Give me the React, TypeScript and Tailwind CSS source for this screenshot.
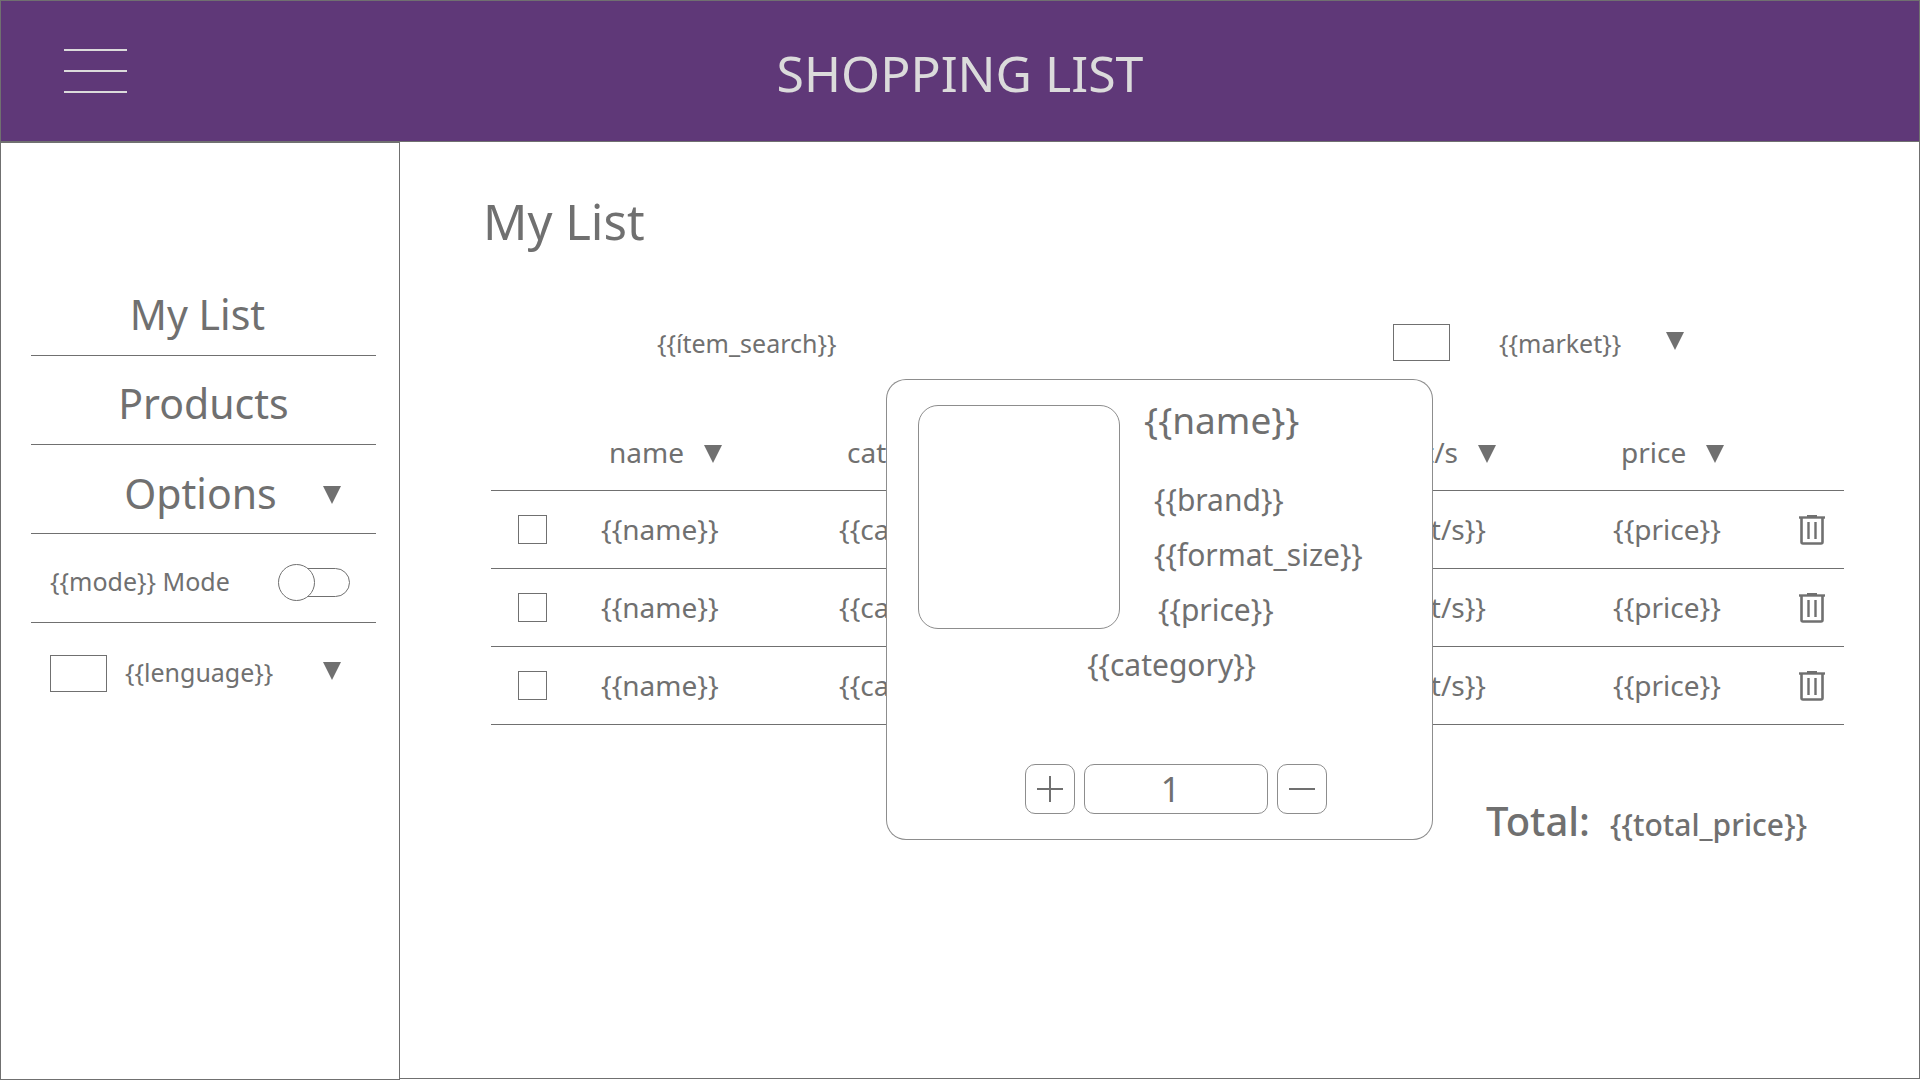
import { useState } from "react";

const rows = [1, 2, 3];

function Arrow({ className = "" }: { className?: string }) {
  return (
    <svg
      viewBox="0 0 18 18"
      className={`h-[18px] w-[18px] shrink-0 fill-[#707070] ${className}`}
      aria-hidden="true"
    >
      <path d="M0 0h18L9 18z" />
    </svg>
  );
}

function TrashIcon() {
  return (
    <svg viewBox="0 0 26 30" className="h-[30px] w-[26px]" fill="none" stroke="#707070" aria-hidden="true">
      <path d="M0 2.5h26" strokeWidth="2.4" />
      <path d="M8 1h10" strokeWidth="2" />
      <path d="M2.5 3v24c0 1 .5 1.5 1.5 1.5h18c1 0 1.5-.5 1.5-1.5V3" strokeWidth="2.6" />
      <path d="M9.5 7v17M16.5 7v17" strokeWidth="2.4" />
    </svg>
  );
}

function SortHeader({ label }: { label: string }) {
  return (
    <button type="button" className="inline-flex items-center gap-5 whitespace-nowrap">
      {label}
      <Arrow className="mt-1" />
    </button>
  );
}

function Sidebar() {
  const [dark, setDark] = useState(false);
  return (
    <aside className="w-[400px] shrink-0 border border-[#707070] pt-[124px] pr-[23px] pl-[30px]">
      <nav>
        <ul className="text-[41px] leading-[60px]">
          <li className="flex h-[89px] items-center justify-center border-b border-[#707070] pt-1.5 pr-3">
            <a href="#list">My List</a>
          </li>
          <li className="flex h-[89px] items-center justify-center border-b border-[#707070] pt-1.5">
            <a href="#products">Products</a>
          </li>
          <li className="h-[89px] border-b border-[#707070]">
            <button type="button" className="relative flex h-full w-full items-center justify-center pt-2 pr-1.5">
              Options
              <Arrow className="absolute right-[35px] mt-1" />
            </button>
          </li>
        </ul>
      </nav>
      <div className="flex h-[89px] items-center justify-between border-b border-[#707070] pt-2 pr-[26px] pl-[19px] text-[25px]">
        <label htmlFor="mode">{"{{mode}} Mode"}</label>
        <span className="relative flex h-[37px] w-[72px] items-center">
          <span className="ml-1 h-[29px] w-full rounded-full border border-[#707070]" />
          <input
            id="mode"
            type="checkbox"
            role="switch"
            checked={dark}
            onChange={() => setDark(!dark)}
            className="absolute left-0 h-[37px] w-[37px] appearance-none rounded-full border border-[#707070] bg-white checked:left-[35px]"
          />
        </span>
      </div>
      <div className="flex h-[100px] items-center gap-[18px] pl-[19px] text-[25px]">
        <span className="h-[37px] w-[57px] border border-[#707070]" />
        <span className="relative flex flex-1 items-center">
          <select aria-label="Language" className="w-full appearance-none bg-transparent outline-none">
            <option>{"{{lenguage}}"}</option>
          </select>
          <Arrow className="pointer-events-none absolute right-[35px] mb-1" />
        </span>
      </div>
    </aside>
  );
}

function ProductCard() {
  const [count, setCount] = useState("1");
  const step = (n: number) => setCount(String(Math.max(0, Number(count) + n)));
  return (
    <section
      role="dialog"
      aria-label="Product"
      className="absolute top-[237px] left-[32%] flex h-[461px] w-[547px] flex-col rounded-[20px] border border-[#707070]/80 bg-white"
    >
      <div className="flex gap-6 pt-[25px] pl-[31px]">
        <div className="h-[224px] w-[202px] rounded-[20px] border border-[#707070]/80" />
        <div className="text-[30px] leading-[55px]">
          <h2 className="mb-[37px] text-[37px] leading-[30px]">{"{{name}}"}</h2>
          <p className="pl-2.5">{"{{brand}}"}</p>
          <p className="pl-2.5">{"{{format_size}}"}</p>
          <p className="pl-3.5">{"{{price}}"}</p>
        </div>
      </div>
      <p className="pl-6 text-center text-[30px] leading-[55px]">{"{{category}}"}</p>
      <div className="mt-auto mb-[25px] flex justify-center gap-[9px] pl-8">
        <button
          type="button"
          aria-label="Add one"
          onClick={() => step(1)}
          className="flex h-[50px] w-[50px] items-center justify-center rounded-[10px] border border-[#707070]/80"
        >
          <svg viewBox="0 0 28 28" className="h-7 w-7" stroke="#707070" strokeWidth="2" aria-hidden="true">
            <path d="M14 1v26M1 14h26" />
          </svg>
        </button>
        <input
          aria-label="Units"
          value={count}
          onChange={(e) => setCount(e.target.value)}
          className="h-[50px] w-[184px] rounded-[10px] border border-[#707070]/80 pr-2.5 text-center text-[34px] outline-none"
        />
        <button
          type="button"
          aria-label="Remove one"
          onClick={() => step(-1)}
          className="flex h-[50px] w-[50px] items-center justify-center rounded-[10px] border border-[#707070]/80"
        >
          <svg viewBox="0 0 28 28" className="h-7 w-7" stroke="#707070" strokeWidth="2" aria-hidden="true">
            <path d="M1 14h26" />
          </svg>
        </button>
      </div>
    </section>
  );
}

export default function App() {
  return (
    <div className="flex min-h-screen flex-col bg-white font-['Noto_Sans','Open_Sans',sans-serif] text-[#707070]">
      <header className="grid h-[142px] grid-cols-[1fr_auto_1fr] items-center border border-[#707070] bg-[#5f3878] px-[63px]">
        <button type="button" aria-label="Menu" className="flex w-[63px] flex-col gap-[19px]">
          <span className="h-0.5 bg-[#dbdbdb]" />
          <span className="h-0.5 bg-[#dbdbdb]" />
          <span className="h-0.5 bg-[#dbdbdb]" />
        </button>
        <h1 className="pt-1 text-[50px] text-[#dbdbdb]">SHOPPING LIST</h1>
      </header>
      <div className="flex flex-1">
        <Sidebar />
        <main className="relative mb-px flex-1 border-r border-b border-[#707070] pr-[75px] pl-[91px]">
          <h2 className="mt-[46px] -ml-2 text-[49px] leading-[66px]">My List</h2>
          <div className="mt-[70px] flex items-center pl-[166px] text-[25px] leading-9">
            <input
              aria-label="Search item"
              placeholder="{{ítem_search}}"
              className="w-[400px] outline-none placeholder:text-[#707070] placeholder:opacity-100"
            />
            <span className="ml-auto h-[37px] w-[57px] border border-[#707070]" />
            <span className="relative mr-[160px] ml-[49px] flex w-[185px] items-center">
              <select aria-label="Market" className="w-full appearance-none bg-transparent outline-none">
                <option>{"{{market}}"}</option>
              </select>
              <Arrow className="pointer-events-none absolute right-0 mb-1" />
            </span>
          </div>
          <table className="mt-[54px] w-full table-fixed border-collapse text-left text-[28px] leading-10">
            <thead>
              <tr className="h-[75px] border-b border-[#707070]">
                <th className="w-[110px]" aria-label="Done" />
                <th className="w-[238px] pl-2 font-normal"><SortHeader label="name" /></th>
                <th className="pl-2 font-normal"><SortHeader label="category" /></th>
                <th className="w-[240px] pr-[117px] font-normal">
                  <div className="flex justify-end"><SortHeader label="unit/s" /></div>
                </th>
                <th className="w-[186px] pl-2 font-normal"><SortHeader label="price" /></th>
                <th className="w-[45px]" aria-label="Delete" />
              </tr>
            </thead>
            <tbody>
              {rows.map((row) => (
                <tr key={row} className="h-[78px] border-b border-[#707070]">
                  <td className="pl-[27px]">
                    <input
                      type="checkbox"
                      aria-label={`Item ${row}`}
                      className="block h-[29px] w-[29px] appearance-none border border-[#707070] checked:bg-[#707070]"
                    />
                  </td>
                  <td>{"{{name}}"}</td>
                  <td>{"{{category}}"}</td>
                  <td className="pr-[127px]">
                    <div className="flex justify-end">{"{{unit/s}}"}</div>
                  </td>
                  <td>{"{{price}}"}</td>
                  <td className="pt-0.5">
                    <button type="button" aria-label={`Delete item ${row}`} className="block">
                      <TrashIcon />
                    </button>
                  </td>
                </tr>
              ))}
            </tbody>
          </table>
          <p className="mt-[66px] flex items-baseline justify-end gap-5 pr-[37px] font-medium">
            <span className="text-[40px]">Total:</span>
            <span className="text-[30px]">{"{{total_price}}"}</span>
          </p>
          <ProductCard />
        </main>
      </div>
    </div>
  );
}
